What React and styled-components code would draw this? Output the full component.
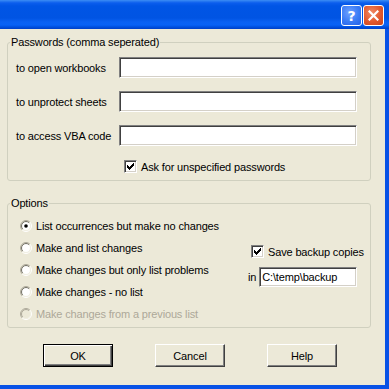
import React from "react";
import styled, { createGlobalStyle, css } from "styled-components";

const GlobalStyle = createGlobalStyle`
  html, body { margin: 0; padding: 0; background: #ECE9D8; }
  body {
    font-family: "Liberation Sans", Arial, sans-serif;
    font-size: 11px;
    letter-spacing: -0.15px;
    color: #000;
  }
`;

const Window = styled.div`
  width: 389px;
  height: 389px;
  display: flex;
  flex-direction: column;
  overflow: hidden;
`;

const TitleBar = styled.div`
  height: 29px;
  flex: none;
  box-sizing: border-box;
  display: flex;
  justify-content: flex-end;
  align-items: flex-start;
  gap: 1px;
  padding: 5px 5px 0 0;
  background: linear-gradient(
    to bottom,
    #3d8ef5 0px,
    #2a7cf1 1px,
    #0b5ded 3px,
    #0055e5 6px,
    #0054e3 18px,
    #0a61f3 22px,
    #0862f6 25px,
    #0050df 27px,
    #0040c8 29px
  );
`;

const CaptionButton = styled.div`
  width: 21px;
  height: 21px;
  box-sizing: border-box;
  border: 1px solid #fff;
  border-radius: 3px;
  display: flex;
  align-items: center;
  justify-content: center;
  color: #fff;
  ${(p) =>
    p.$close
      ? css`
          background: radial-gradient(circle at 40% 35%, #f08a65 0%, #e2582d 55%, #c8441c 100%);
        `
      : css`
          background: radial-gradient(circle at 40% 35%, #6fa2ff 0%, #3a7bf5 55%, #2560e6 100%);
        `}
`;

const HelpGlyph = styled.span`
  font-family: "DejaVu Sans", sans-serif;
  font-weight: bold;
  font-size: 14px;
  letter-spacing: 0;
  line-height: 1;
`;

const Frame = styled.div`
  flex: 1;
  display: flex;
  flex-direction: column;
  background: #ece9d8;
  border-right: 4px solid #0852e6;
  border-bottom: 4px solid #0852e6;
  padding: 7px 14px 0 7px;
  min-height: 0;
`;

const Group = styled.fieldset`
  margin: 0;
  margin-top: ${(p) => p.$top || 0}px;
  padding: 0;
  border: 1px solid #d0d0bf;
  border-radius: 3px;
  min-width: 0;
`;

const Legend = styled.legend`
  margin-left: 2px;
  padding: 0 1px;
  line-height: 13px;
  font-size: 11px;
`;

const PasswordBody = styled.div`
  padding: 8px 13px 7px 8px;
  display: flex;
  flex-direction: column;
`;

const FieldGrid = styled.div`
  display: grid;
  grid-template-columns: 103px 1fr;
  row-gap: 13px;
  align-items: center;
`;

const Label = styled.label`
  white-space: nowrap;
`;

const TextInput = styled.input`
  height: ${(p) => p.$h || 21}px;
  box-sizing: border-box;
  width: 100%;
  margin: 0;
  padding: 0 2px;
  font-family: "Liberation Sans", Arial, sans-serif;
  font-size: 11px;
  letter-spacing: -0.15px;
  color: #000;
  background: #fff;
  border: 1px solid;
  border-color: #808080 #fff #fff #808080;
  box-shadow: inset 1px 1px 0 #404040, inset -1px -1px 0 #d4d0c8;
  outline: none;
`;

const CheckRow = styled.div`
  display: flex;
  align-items: center;
  gap: 4px;
  height: 13px;
  margin-top: ${(p) => p.$top || 0}px;
  margin-left: ${(p) => p.$left || 0}px;
  white-space: nowrap;
`;

const Box = styled.span`
  width: 13px;
  height: 13px;
  box-sizing: border-box;
  flex: none;
  background: #fff;
  border: 1px solid;
  border-color: #808080 #fff #fff #808080;
  box-shadow: inset 1px 1px 0 #404040, inset -1px -1px 0 #d4d0c8;
  display: flex;
  align-items: center;
  justify-content: center;
`;

const OptionsBody = styled.div`
  padding: 7px 13px 4px 12px;
  display: flex;
`;

const RadioList = styled.div`
  display: flex;
  flex-direction: column;
  gap: 4px;
`;

const RadioRow = styled.div`
  height: 18px;
  display: flex;
  align-items: center;
  gap: 4px;
  white-space: nowrap;
  color: ${(p) => (p.$disabled ? "#aca899" : "#000")};
`;

const SideColumn = styled.div`
  margin-left: auto;
  width: 109px;
  padding-top: 28px;
  display: flex;
  flex-direction: column;
  gap: 9px;
`;

const InRow = styled.div`
  display: flex;
  align-items: center;
  gap: 3px;
`;

const ButtonRow = styled.div`
  display: flex;
  gap: 42px;
  margin-top: 16px;
  padding-left: 36px;
`;

const Button = styled.button`
  width: 70px;
  height: 23px;
  box-sizing: border-box;
  margin: 0;
  padding: 0;
  font-family: "Liberation Sans", Arial, sans-serif;
  font-size: 11px;
  letter-spacing: -0.15px;
  color: #000;
  background: #ece9d8;
  border: 1px solid;
  border-color: #fff #404040 #404040 #fff;
  box-shadow: inset -1px -1px 0 #808080;
  ${(p) =>
    p.$default &&
    css`
      border: 1px solid #000;
      box-shadow: inset 1px 1px 0 #fff, inset -1px -1px 0 #404040, inset -2px -2px 0 #808080;
    `}
`;

function Check() {
  const cols = [
    [0, 2], [1, 3], [2, 4], [3, 3], [4, 2], [5, 1], [6, 0],
  ];
  return (
    <svg width="7" height="7" viewBox="0 0 7 7" shapeRendering="crispEdges">
      {cols.map(([x, y]) => (
        <rect key={x} x={x} y={y} width="1" height="3" fill="#000" />
      ))}
    </svg>
  );
}

function Checkbox({ checked }) {
  return <Box>{checked && <Check />}</Box>;
}

function arc(r, first) {
  const d = 0.7071 * r;
  const bl = `${6 - d} ${6 + d}`;
  const tr = `${6 + d} ${6 - d}`;
  return first ? `M${bl} A${r} ${r} 0 0 1 ${tr}` : `M${tr} A${r} ${r} 0 0 1 ${bl}`;
}

function Radio({ checked, disabled }) {
  return (
    <svg width="12" height="12" viewBox="0 0 12 12" style={{ flex: "none" }}>
      <circle cx="6" cy="6" r="4.5" fill={disabled ? "#ece9d8" : "#fff"} />
      <path d={arc(5.5, true)} stroke="#aca899" strokeWidth="1" fill="none" />
      <path d={arc(4.5, true)} stroke={disabled ? "#aca899" : "#716f64"} strokeWidth="1" fill="none" />
      <path d={arc(5.5, false)} stroke="#fff" strokeWidth="1" fill="none" />
      <path d={arc(4.5, false)} stroke="#f1efe2" strokeWidth="1" fill="none" />
      {checked && <circle cx="6" cy="6" r="1.8" fill="#000" />}
    </svg>
  );
}

const radios = [
  { label: "List occurrences but make no changes", checked: true },
  { label: "Make and list changes" },
  { label: "Make changes but only list problems" },
  { label: "Make changes - no list" },
  { label: "Make changes from a previous list", disabled: true },
];

export default function App() {
  return (
    <>
      <GlobalStyle />
      <Window>
        <TitleBar>
          <CaptionButton>
            <HelpGlyph>?</HelpGlyph>
          </CaptionButton>
          <CaptionButton $close>
            <svg width="11" height="11" viewBox="0 0 11 11">
              <path d="M1.5 1.5 L9.5 9.5 M9.5 1.5 L1.5 9.5" stroke="#fff" strokeWidth="2.2" strokeLinecap="square" />
            </svg>
          </CaptionButton>
        </TitleBar>
        <Frame>
          <Group>
            <Legend>Passwords (comma seperated)</Legend>
            <PasswordBody>
              <FieldGrid>
                <Label>to open workbooks</Label>
                <TextInput defaultValue="" />
                <Label>to unprotect sheets</Label>
                <TextInput defaultValue="" />
                <Label>to access VBA code</Label>
                <TextInput defaultValue="" />
              </FieldGrid>
              <CheckRow $top={14} $left={108}>
                <Checkbox checked />
                <span>Ask for unspecified passwords</span>
              </CheckRow>
            </PasswordBody>
          </Group>
          <Group $top={16}>
            <Legend>Options</Legend>
            <OptionsBody>
              <RadioList>
                {radios.map((r) => (
                  <RadioRow key={r.label} $disabled={r.disabled}>
                    <Radio checked={r.checked} disabled={r.disabled} />
                    <span>{r.label}</span>
                  </RadioRow>
                ))}
              </RadioList>
              <SideColumn>
                <CheckRow $left={3}>
                  <Checkbox checked />
                  <span>Save backup copies</span>
                </CheckRow>
                <InRow>
                  <span>in</span>
                  <TextInput $h={20} defaultValue="C:\temp\backup" />
                </InRow>
              </SideColumn>
            </OptionsBody>
          </Group>
          <ButtonRow>
            <Button $default>OK</Button>
            <Button>Cancel</Button>
            <Button>Help</Button>
          </ButtonRow>
        </Frame>
      </Window>
    </>
  );
}
